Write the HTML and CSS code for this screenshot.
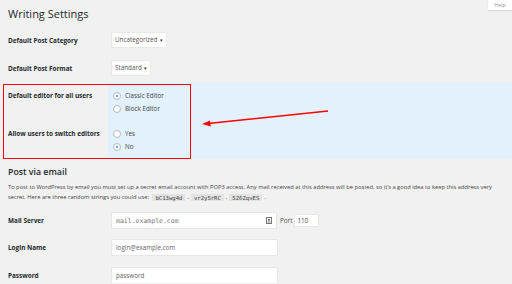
FILE: index.html
```html
<!DOCTYPE html>
<html lang="en">
<head>
    <meta charset="UTF-8">
    <meta name="viewport" content="width=device-width, initial-scale=1.0">
    <title>Writing Settings</title>
    <link rel="stylesheet" href="styles.css">
</head>
<body>
    <div class="help-tab">Help</div>

    <div class="page">
        <h1 class="page-title">Writing Settings</h1>

        <div class="row row-first">
            <div class="label">Default Post Category</div>
            <div class="field"><span class="select">Uncategorized <span class="caret">&#9662;</span></span></div>
        </div>
        <div class="row row-second">
            <div class="label">Default Post Format</div>
            <div class="field"><span class="select">Standard <span class="caret">&#9662;</span></span></div>
        </div>
    </div>

    <!-- Highlighted editor settings -->
    <div class="editor-band">
        <div class="band-row">
            <div class="label">Default editor for all users</div>
            <div class="radios">
                <label class="radio"><span class="dot checked"></span>Classic Editor</label>
                <label class="radio"><span class="dot"></span>Block Editor</label>
            </div>
        </div>
        <div class="band-row band-row-second">
            <div class="label">Allow users to switch editors</div>
            <div class="radios">
                <label class="radio"><span class="dot"></span>Yes</label>
                <label class="radio"><span class="dot checked"></span>No</label>
            </div>
        </div>
        <div class="note-box"></div>
        <svg class="note-arrow" width="512" height="284" viewBox="0 0 512 284">
            <line x1="328" y1="111" x2="208" y2="123.5" stroke="#f00" stroke-width="1.4"/>
            <polygon points="202,124 210,120.5 210.8,126.5" fill="#f00"/>
        </svg>
    </div>

    <div class="page">
        <h2 class="section-title">Post via email</h2>
        <p class="intro">To post to WordPress by email you must set up a secret email account with POP3 access. Any mail received at this address will be posted, so it’s a good idea to keep this address very secret. Here are three random strings you could use: <code>bC13wg4d</code><span class="sep">,</span><code>vr2y5rRC</code><span class="sep">,</span><code>526ZqvES</code><span class="sep">.</span></p>

        <div class="row row-mail">
            <div class="label">Mail Server</div>
            <div class="field">
                <span class="input input-mail mono">mail.example.com
                    <svg class="card-icon" width="6" height="7" viewBox="0 0 6 7"><rect x="0.5" y="0.5" width="5" height="6" fill="none" stroke="#777"/><rect x="2" y="1.8" width="2" height="2" fill="#777"/><line x1="1.5" y1="5" x2="4.5" y2="5" stroke="#777"/></svg>
                </span>
                <span class="port-label">Port</span>
                <span class="input input-port">110</span>
            </div>
        </div>
        <div class="row row-login">
            <div class="label">Login Name</div>
            <div class="field"><span class="input input-wide">login@example.com</span></div>
        </div>
        <div class="row row-pass">
            <div class="label">Password</div>
            <div class="field"><span class="input input-wide">password</span></div>
        </div>
    </div>
</body>
</html>
```

FILE: styles.css
```css
/* Global Styles */
body {
    margin: 0;
    background-color: #f1f1f1;
    font-family: 'Open Sans', 'Noto Sans', sans-serif;
    font-size: 6.4px;
    color: #23282d;
    overflow: hidden;
    position: relative;
}

.page {
    padding-left: 8px;
}

.help-tab {
    position: absolute;
    top: 0;
    right: 0;
    width: 24px;
    height: 10px;
    line-height: 10px;
    background-color: #ffffff;
    color: #999;
    font-size: 5.4px;
    text-align: center;
    box-shadow: 0 1px 1px rgba(0, 0, 0, 0.1);
}

.page-title {
    margin: 0;
    padding-top: 6px;
    font-size: 11px;
    line-height: 16px;
    font-weight: 400;
    color: #23282d;
}

/* Rows */
.row {
    display: flex;
    align-items: center;
    height: 14px;
}

.row-first { margin-top: 11px; }
.row-second { margin-top: 14px; }

.label {
    width: 104px;
    font-weight: 700;
    font-size: 6.4px;
    flex-shrink: 0;
}

.field {
    display: flex;
    align-items: center;
}

.select {
    display: inline-block;
    height: 14px;
    line-height: 14px;
    padding: 0 3px 0 3px;
    background-color: #ffffff;
    color: #555;
    font-size: 6.3px;
    box-shadow: 0 0 0 0.5px #e2e2e2;
}

.caret {
    font-size: 5px;
    color: #333;
    margin-left: 1px;
}

/* Editor band */
.editor-band {
    position: relative;
    margin-top: 7px;
    height: 77px;
    box-sizing: border-box;
    padding: 7px 0 0 8px;
    background: linear-gradient(to right, #f1f1f1 108px, #e3f1fd 108px);
}

.band-row {
    display: flex;
    align-items: flex-start;
}

.band-row .label {
    line-height: 13px;
}

.band-row-second {
    margin-top: 12px;
}

.radios {
    display: flex;
    flex-direction: column;
    margin-left: 1px;
}

.radio {
    display: flex;
    align-items: center;
    height: 13px;
    color: #444;
    font-size: 6.3px;
}

.dot {
    width: 6px;
    height: 6px;
    border-radius: 50%;
    border: 0.5px solid #b4b9be;
    background-color: #ffffff;
    margin-right: 4px;
    position: relative;
}

.dot.checked::after {
    content: '';
    position: absolute;
    left: 2px;
    top: 2px;
    width: 2px;
    height: 2px;
    border-radius: 50%;
    background-color: #1e8cbe;
}

.note-box {
    position: absolute;
    left: 3px;
    top: 2px;
    width: 186px;
    height: 73px;
    border: 1.5px solid #f00;
}

.note-arrow {
    position: absolute;
    left: 0;
    top: -82px;
}

/* Post via email */
.section-title {
    margin: 7px 0 0 0;
    font-size: 8.8px;
    line-height: 12px;
    font-weight: 600;
}

.intro {
    margin: 4px 0 0 0;
    font-size: 5.75px;
    line-height: 10px;
    color: #444;
    padding-right: 6px;
}

code {
    font-family: 'DejaVu Sans Mono', monospace;
    font-size: 5.6px;
    line-height: 7px;
    background-color: #e3e3e3;
    padding: 0.5px 3px;
    margin-left: 2px;
    color: #444;
}

.sep {
    margin-left: 2px;
}

.row-mail { margin-top: 11px; height: 15px; }
.row-login { margin-top: 12px; height: 15px; }
.row-pass { margin-top: 13px; height: 15px; }

.input {
    display: inline-flex;
    align-items: center;
    box-sizing: border-box;
    height: 15px;
    padding: 0 4px;
    background-color: #ffffff;
    color: #666;
    font-size: 6.3px;
    box-shadow: 0 0 0 0.5px #dcdcdc;
}

.mono {
    font-family: 'DejaVu Sans Mono', monospace;
    font-size: 6.5px;
    color: #777;
}

.input-mail {
    width: 164px;
    justify-content: space-between;
}

.card-icon {
    display: block;
}

.input-wide {
    width: 165px;
}

.port-label {
    margin-left: 4px;
    color: #555;
    font-size: 6.3px;
}

.input-port {
    margin-left: 3px;
    width: 23px;
    height: 11px;
    padding: 0 2px;
    color: #444;
}
```
